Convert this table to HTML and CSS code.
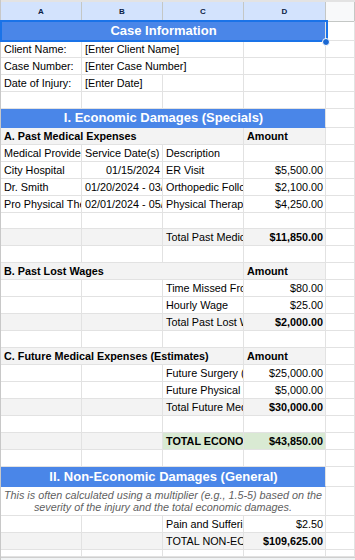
FILE: index.html
```html
<!DOCTYPE html>
<html>
<head>
<meta charset="utf-8">
<link rel="stylesheet" href="styles.css">
</head>
<body>
<div class="sheet">
  <div class="row hdr">
    <div class="hc sel">A</div><div class="hc sel">B</div><div class="hc sel">C</div><div class="hc sel">D</div><div class="hc"></div>
  </div>

  <div class="row band20">
    <div class="c band">Case Information</div><div class="c"></div>
  </div>
  <div class="row">
    <div class="c">Client Name:</div><div class="c s2">[Enter Client Name]</div><div class="c"></div><div class="c"></div>
  </div>
  <div class="row">
    <div class="c">Case Number:</div><div class="c s2">[Enter Case Number]</div><div class="c"></div><div class="c"></div>
  </div>
  <div class="row">
    <div class="c">Date of Injury:</div><div class="c">[Enter Date]</div><div class="c"></div><div class="c"></div><div class="c"></div>
  </div>
  <div class="row">
    <div class="c"></div><div class="c"></div><div class="c"></div><div class="c"></div><div class="c"></div>
  </div>

  <div class="row band19">
    <div class="c band">I. Economic Damages (Specials)</div><div class="c"></div>
  </div>
  <div class="row">
    <div class="c s3 g b">A. Past Medical Expenses</div><div class="c g b">Amount</div><div class="c"></div>
  </div>
  <div class="row">
    <div class="c">Medical Provider</div><div class="c">Service Date(s)</div><div class="c">Description</div><div class="c"></div><div class="c"></div>
  </div>
  <div class="row">
    <div class="c">City Hospital</div><div class="c r">01/15/2024</div><div class="c">ER Visit</div><div class="c r">$5,500.00</div><div class="c"></div>
  </div>
  <div class="row">
    <div class="c">Dr. Smith</div><div class="c">01/20/2024 - 03/15/2024</div><div class="c">Orthopedic Follow-up</div><div class="c r">$2,100.00</div><div class="c"></div>
  </div>
  <div class="row">
    <div class="c">Pro Physical Therapy</div><div class="c">02/01/2024 - 05/01/2024</div><div class="c">Physical Therapy</div><div class="c r">$4,250.00</div><div class="c"></div>
  </div>
  <div class="row h16">
    <div class="c"></div><div class="c"></div><div class="c"></div><div class="c"></div><div class="c"></div>
  </div>
  <div class="row">
    <div class="c g"></div><div class="c g"></div><div class="c g">Total Past Medical Expenses</div><div class="c g r b">$11,850.00</div><div class="c"></div>
  </div>
  <div class="row">
    <div class="c"></div><div class="c"></div><div class="c"></div><div class="c"></div><div class="c"></div>
  </div>

  <div class="row">
    <div class="c s3 g b">B. Past Lost Wages</div><div class="c g b">Amount</div><div class="c"></div>
  </div>
  <div class="row">
    <div class="c"></div><div class="c"></div><div class="c">Time Missed From Work (Hours)</div><div class="c r">$80.00</div><div class="c"></div>
  </div>
  <div class="row">
    <div class="c"></div><div class="c"></div><div class="c">Hourly Wage</div><div class="c r">$25.00</div><div class="c"></div>
  </div>
  <div class="row">
    <div class="c g"></div><div class="c g"></div><div class="c g">Total Past Lost Wages</div><div class="c g r b">$2,000.00</div><div class="c"></div>
  </div>
  <div class="row">
    <div class="c"></div><div class="c"></div><div class="c"></div><div class="c"></div><div class="c"></div>
  </div>

  <div class="row">
    <div class="c s3 g b">C. Future Medical Expenses (Estimates)</div><div class="c g b">Amount</div><div class="c"></div>
  </div>
  <div class="row">
    <div class="c"></div><div class="c"></div><div class="c">Future Surgery (Estimate)</div><div class="c r">$25,000.00</div><div class="c"></div>
  </div>
  <div class="row">
    <div class="c"></div><div class="c"></div><div class="c">Future Physical Therapy</div><div class="c r">$5,000.00</div><div class="c"></div>
  </div>
  <div class="row">
    <div class="c g"></div><div class="c g"></div><div class="c g">Total Future Medical Expenses</div><div class="c g r b">$30,000.00</div><div class="c"></div>
  </div>
  <div class="row">
    <div class="c"></div><div class="c"></div><div class="c"></div><div class="c"></div><div class="c"></div>
  </div>
  <div class="row">
    <div class="c g"></div><div class="c g"></div><div class="c gr b">TOTAL ECONOMIC DAMAGES</div><div class="c gr r b">$43,850.00</div><div class="c"></div>
  </div>
  <div class="row">
    <div class="c"></div><div class="c"></div><div class="c"></div><div class="c"></div><div class="c"></div>
  </div>

  <div class="row band20">
    <div class="c band">II. Non-Economic Damages (General)</div><div class="c"></div>
  </div>
  <div class="row note-row">
    <div class="c note">This is often calculated using a multiplier (e.g., 1.5-5) based on the severity of the injury and the total economic damages.</div><div class="c"></div>
  </div>
  <div class="row">
    <div class="c"></div><div class="c"></div><div class="c">Pain and Suffering Multiplier</div><div class="c r">$2.50</div><div class="c"></div>
  </div>
  <div class="row">
    <div class="c g"></div><div class="c g"></div><div class="c g">TOTAL NON-ECONOMIC DAMAGES</div><div class="c g r b">$109,625.00</div><div class="c"></div>
  </div>
  <div class="row h7">
    <div class="c"></div><div class="c"></div><div class="c"></div><div class="c"></div><div class="c"></div>
  </div>
  <div class="foot"></div>

  <div class="selbox"></div>
  <div class="handle"></div>
</div>
</body>
</html>
```
FILE: styles.css
```css
html, body {
  margin: 0;
  padding: 0;
  background: #ffffff;
}
body {
  width: 355px;
  height: 560px;
  overflow: hidden;
  font-family: "Liberation Sans", Arial, sans-serif;
  color: #000;
}
.sheet {
  position: relative;
  border-left: 1px solid #c8c8c8;
  width: 354px;
}
.row {
  display: grid;
  grid-template-columns: 81px 81px 81px 82px 1fr;
  height: 17px;
}
.row.h16 { height: 16px; }
.row.h7 { height: 7px; }
.row.band20 { height: 20px; }
.row.band19 { height: 19px; }
.row.note-row { height: 29px; }

.hdr {
  height: 21px;
  box-sizing: border-box;
  border-top: 2px solid #e3e3e3;
}
.hc {
  box-sizing: border-box;
  border-right: 1px solid #c4c7c5;
  border-bottom: 1px solid #c4c7c5;
  background: #f8f9fa;
  font-size: 8px;
  font-weight: bold;
  color: #1f2a44;
  text-align: center;
  line-height: 18px;
  padding-top: 1px;
}
.hc.sel {
  background: #d3e3fd;
  color: #0b1d46;
}

.c {
  box-sizing: border-box;
  border-right: 1px solid #e2e2e2;
  border-bottom: 1px solid #e2e2e2;
  padding: 0 2px 0 3px;
  font-size: 10.8px;
  line-height: 16px;
  white-space: nowrap;
  overflow: hidden;
}
.s2 { grid-column: span 2; }
.s3 { grid-column: span 3; }
.r { text-align: right; }
.b { font-weight: bold; }
.g { background: #f3f3f3; }
.gr { background: #d9ead3; }

.band {
  grid-column: 1 / 5;
  background: #4a86e8;
  color: #ffffff;
  font-weight: bold;
  font-size: 13px;
  text-align: center;
  line-height: 19px;
  border-bottom-color: #4a86e8;
}
.band19 .band { line-height: 18px; }

.note {
  grid-column: 1 / 5;
  white-space: normal;
  font-style: italic;
  color: #5f5f5f;
  text-align: center;
  line-height: 12px;
  padding: 2px 0 0 0;
}

.foot {
  height: 4px;
  border-top: 1px solid #cfcfcf;
  background: #f1f3f4;
}

.selbox {
  position: absolute;
  left: -1px;
  top: 20px;
  width: 328px;
  height: 22px;
  box-sizing: border-box;
  border: 2px solid #1a73e8;
  pointer-events: none;
}
.handle {
  position: absolute;
  left: 321px;
  top: 38px;
  width: 8px;
  height: 8px;
  box-sizing: border-box;
  border-radius: 50%;
  background: #1967d2;
  border: 1px solid #ffffff;
}
```
